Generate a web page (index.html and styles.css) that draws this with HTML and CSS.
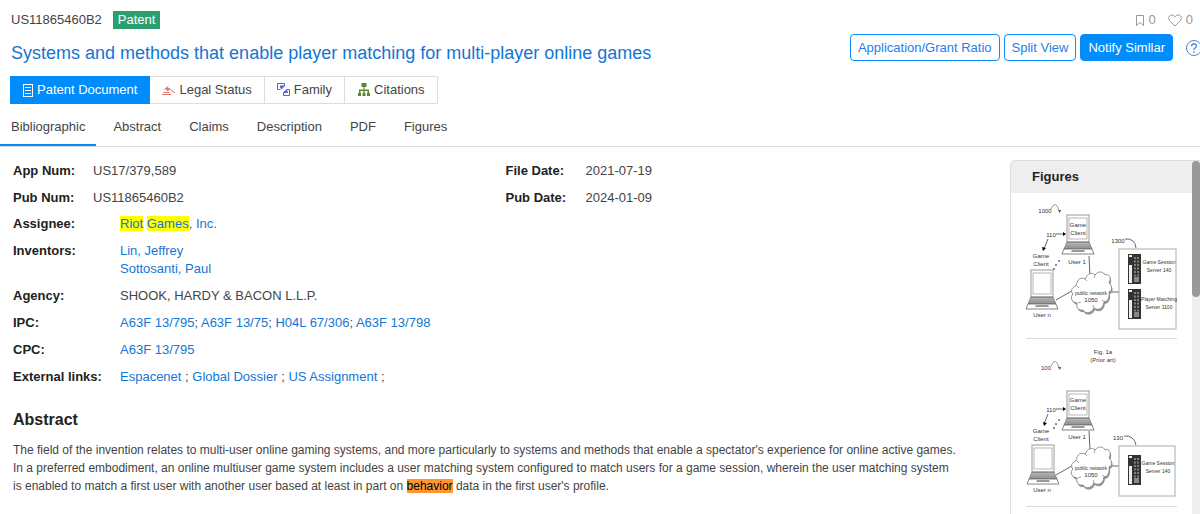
FILE: index.html
```html
<!DOCTYPE html>
<html lang="en">
<head>
<meta charset="utf-8">
<title>US11865460B2</title>
<link rel="stylesheet" href="styles.css">
</head>
<body>
<svg class="defs" aria-hidden="true">
  <defs>
    <g id="laptop">
      <rect x="5" y="0" width="22" height="27" fill="#fff" stroke="#999"/>
      <rect x="7" y="3" width="18" height="21" fill="#fff" stroke="#999" stroke-width=".7"/>
      <path d="M5 27h22l3 7H2z" fill="#999" stroke="#666" stroke-width=".6"/>
      <path d="M4 30h24M5 28.500h22" stroke="#ccc" stroke-width=".5"/>
      <path d="M2 34h28l2 5H0z" fill="#fff" stroke="#666" stroke-width=".8"/>
      <path d="M10 35h12l1 2H9z" fill="#999"/>
    </g>
    <g id="cloud">
      <path d="M6 14c1-7 5-9 9-7 3-6 7-7 10-4 4-5 9-3 10 0 4-2 7 3 4 8 4 3 3 8 0 9 1 6-2 10-5 10-1 7-6 9-10 6-3 6-9 6-11 2-5 1-7-3-6-7-6-1-7-6-4-9-3-3-1-7 3-8z" transform="translate(1 2)" fill="#999"/>
      <path d="M6 14c1-7 5-9 9-7 3-6 7-7 10-4 4-5 9-3 10 0 4-2 7 3 4 8 4 3 3 8 0 9 1 6-2 10-5 10-1 7-6 9-10 6-3 6-9 6-11 2-5 1-7-3-6-7-6-1-7-6-4-9-3-3-1-7 3-8z" fill="#fff" stroke="#777" stroke-width=".8"/>
      <path d="M7 14l2 2M15 7l2 2M25 3l-1 3M35 30l-3-2M8 31l3-1M24 36l-1-3" stroke="#777" stroke-width=".7"/>
    </g>
    <g id="server">
      <rect width="13" height="30" fill="#333"/>
      <rect x="1" y="1" width="3" height="28" fill="#eee"/>
      <rect x="1" y="3" width="3" height="8" fill="#333"/>
      <path d="M7 3v20M10 3v20" stroke="#999" stroke-width="1.500" stroke-dasharray="2 1.500"/>
      <rect x="6" y="23" width="5" height="5" fill="#888"/>
    </g>
    <g id="arrow-arc"><path d="M0 4Q5-6 8 6" fill="none" stroke="#888" stroke-width=".9"/><path d="M7 5l2 3 1-3z" fill="#555"/></g>
  </defs>
</svg>

<header class="header">
  <div class="heading">
    <div class="number-row"><span>US11865460B2</span><span class="tag">Patent</span></div>
    <h1 class="title"><a href="#">Systems and methods that enable player matching for multi-player online games</a></h1>
  </div>
  <div class="tools">
    <div class="counts">
      <button class="count"><svg width="10" height="13" viewBox="0 0 10 13"><path d="M1.500 1.500h7v10L5 8.500 1.500 11.500z" fill="none" stroke="#999"/></svg>0</button>
      <button class="count"><svg width="14" height="13" viewBox="0 0 14 13"><path d="M7 12L1.800 6.800C-.5 4 1 1 3.800 1 5.500 1 6.500 2 7 3 7.500 2 8.500 1 10.200 1 13 1 14.500 4 12.200 6.800z" fill="none" stroke="#999"/></svg>0</button>
    </div>
    <div class="actions">
      <button class="btn">Application/Grant Ratio</button>
      <button class="btn">Split View</button>
      <button class="btn primary">Notify Simllar</button>
      <button class="help" aria-label="Help"><svg width="18" height="18" viewBox="0 0 18 18" fill="none" stroke="#4a86d8"><circle cx="9" cy="9" r="7.500"/><path d="M6.500 7.200Q6.500 5 9 5T11.500 7Q11.500 8 10 9T9 11" stroke-width="1.300"/><path d="M9 12.300v1.400" stroke-width="1.500"/></svg></button>
    </div>
  </div>
</header>

<nav class="views">
  <button class="view active"><svg width="12" height="14" viewBox="0 0 12 14" fill="none" stroke="#fff"><rect x="1.500" y="1.500" width="9" height="12"/><path d="M3 4.500h6M3 7.500h6M3 10.500h6"/></svg>Patent Document</button>
  <button class="view"><svg width="14" height="12" viewBox="0 0 14 12" fill="none" stroke="#e57070"><path d="M0 10.500h9M1.500 8.500h6"/><path d="M2.500 5.500l4-3.500M5 7l3-3" stroke-width="1"/><path d="M4 4l3 2" stroke-width="2.500"/><path d="M7 4.500l6 4.500"/></svg>Legal Status</button>
  <button class="view"><svg width="14" height="14" viewBox="0 0 14 14" fill="none" stroke="#5a5ae0"><path d="M3.500 6.500h-3v-6h7v3"/><path d="M9.500 6.500h3v6h-6v-3"/><path d="M3 3h4L4.500 6z" fill="#5a5ae0"/><path d="M6.500 9.500h4L9.500 7z" fill="#5a5ae0"/></svg>Family</button>
  <button class="view"><svg width="14" height="14" viewBox="0 0 14 14" fill="#5b8a2c"><rect x="4.500" y="0" width="5" height="4"/><path d="M6.500 4h1v2.500H12V10h-1.500V8H7.700v2H6.300V8H3.500v2H2V6.500h4.500z"/><path d="M1 10h3v3H1zM5.500 10h3v3h-3zM10 10h3v3h-3z"/></svg>Citations</button>
</nav>

<nav class="tabs">
  <a class="tab active" href="#">Bibliographic</a>
  <a class="tab" href="#abstract">Abstract</a>
  <a class="tab" href="#">Claims</a>
  <a class="tab" href="#">Description</a>
  <a class="tab" href="#">PDF</a>
  <a class="tab" href="#figures">Figures</a>
</nav>

<div class="content">
  <main class="details">
    <dl class="pairs">
      <div class="pair"><dt>App Num:</dt><dd>US17/379,589</dd></div>
      <div class="pair"><dt>File Date:</dt><dd>2021-07-19</dd></div>
      <div class="pair"><dt>Pub Num:</dt><dd>US11865460B2</dd></div>
      <div class="pair"><dt>Pub Date:</dt><dd>2024-01-09</dd></div>
    </dl>
    <dl class="fields">
      <dt>Assignee:</dt><dd><a href="#"><mark>Riot</mark> <mark>Games</mark>, Inc.</a></dd>
      <dt>Inventors:</dt><dd><a href="#">Lin, Jeffrey</a><br><a href="#">Sottosanti, Paul</a></dd>
      <dt>Agency:</dt><dd>SHOOK, HARDY &amp; BACON L.L.P.</dd>
      <dt>IPC:</dt><dd><a href="#">A63F 13/795</a>; <a href="#">A63F 13/75</a>; <a href="#">H04L 67/306</a>; <a href="#">A63F 13/798</a></dd>
      <dt>CPC:</dt><dd><a href="#">A63F 13/795</a></dd>
      <dt>External links:</dt><dd><a href="#">Espacenet</a> ; <a href="#">Global Dossier</a> ; <a href="#">US Assignment</a> ;</dd>
    </dl>
    <h2 class="section-title" id="abstract">Abstract</h2>
    <p class="abstract">The field of the invention relates to multi-user online gaming systems, and more particularly to systems and methods that enable a spectator's experience for online active games.<br>In a preferred embodiment, an online multiuser game system includes a user matching system configured to match users for a game session, wherein the user matching system<br>is enabled to match a first user with another user based at least in part on <mark class="hit">behavior</mark> data in the first user's profile.</p>
  </main>
  <aside class="figures" id="figures">
    <div class="figures-main">
      <h2 class="figures-title">Figures</h2>
      <div class="figure">
        <svg width="150" height="145" viewBox="0 0 150 145" class="drawing">
          <text x="19" y="20">1000</text><use href="#arrow-arc" x="25" y="12"/>
          <use href="#laptop" x="36" y="22"/><text x="52" y="34">Game</text><text x="52" y="42">Client</text><text x="51" y="71">User 1</text>
          <text x="25" y="44">110</text>
          <path d="M30 41h8M22 46l-4 10M63 63l1 21M30 107l21-12M84 99h9" class="line"/><path d="M37 39l3 2-3 2zM16 54l1 4 3-3z"/>
          <circle cx="28" cy="76" r=".8"/><circle cx="30" cy="72" r=".8"/><circle cx="33" cy="68" r=".8"/>
          <text x="15" y="65">Game</text><text x="15" y="73">Client</text>
          <use href="#laptop" x="0" y="77"/><text x="16" y="124">User n</text>
          <use href="#cloud" x="44" y="79"/><text x="65" y="102" class="small">public network</text><text x="65" y="109">1050</text>
          <text x="92" y="50">1300</text><path d="M99 46q10-1 11 9" class="line"/>
          <rect x="93" y="56" width="57" height="80" class="box"/>
          <use href="#server" x="102" y="61"/><use href="#server" x="102" y="96"/>
          <text x="133" y="71" class="small">Game Session</text><text x="133" y="79" class="small">Server 140</text>
          <text x="133" y="108" class="small">Player Matching</text><text x="133" y="116" class="small">Server 1100</text>
        </svg>
      </div>
      <div class="figure">
        <svg width="150" height="167" viewBox="0 0 150 167" class="drawing">
          <text x="77" y="15">Fig. 1a</text><text x="77" y="23">(Prior art)</text>
          <text x="20" y="31">100</text><use href="#arrow-arc" x="25" y="23"/>
          <use href="#laptop" x="36" y="52"/><text x="52" y="63">Game</text><text x="52" y="71">Client</text><text x="51" y="100">User 1</text>
          <text x="25" y="73">110</text>
          <path d="M30 70h8M22 75l-4 10M63 92l1 19M30 136l21-12M84 127h9" class="line"/><path d="M37 68l3 2-3 2zM17 83l1 4 3-3z"/>
          <circle cx="28" cy="89" r=".8"/><circle cx="30" cy="85" r=".8"/><circle cx="33" cy="81" r=".8"/>
          <text x="15" y="94">Game</text><text x="15" y="102">Client</text>
          <use href="#laptop" x="1" y="106"/><text x="16" y="153">User n</text>
          <use href="#cloud" x="44" y="108"/><text x="65" y="131" class="small">public network</text><text x="65" y="138">1050</text>
          <text x="92" y="101">130</text><path d="M98 97q10-1 12 9" class="line"/>
          <rect x="93" y="107" width="56" height="50" class="box"/>
          <use href="#server" x="102" y="116"/>
          <text x="132" y="126" class="small">Game Session</text><text x="132" y="134" class="small">Server 140</text>
        </svg>
      </div>
    </div>
    <div class="scrollbar"><div class="thumb"></div></div>
  </aside>
</div>
</body>
</html>
```
FILE: styles.css
```css
* { box-sizing: border-box; }
body {
  margin: 0;
  min-height: 100vh;
  display: flex;
  flex-direction: column;
  overflow: hidden;
  background: #fff;
  color: #444;
  font: 13px/18px "Liberation Sans", Arial, sans-serif;
}
a { color: #1276d6; text-decoration: none; }
button { font: inherit; color: inherit; background: none; border: 0; padding: 0; cursor: pointer; }
h1, h2, p, dl, dd { margin: 0; }
.defs { position: absolute; width: 0; height: 0; }

.header { display: flex; justify-content: space-between; padding: 11px 0 0 11px; }
.number-row { display: flex; align-items: center; gap: 11px; }
.tag { background: #2c9f6e; color: #fff; padding: 0 5px; }
.title { margin-top: 12px; font-size: 18px; line-height: 24px; font-weight: 400; }
.tools { display: flex; flex-direction: column; flex: none; margin-right: -3px; }
.counts { display: flex; justify-content: flex-end; gap: 12px; margin-right: 10px; color: #999; }
.count { display: flex; align-items: center; gap: 4px; }
.actions { display: flex; align-items: center; gap: 4px; margin-top: 5px; }
.btn { height: 27px; padding: 0 7px; border: 1px solid #0a8cff; border-radius: 4px; color: #1a7ff0; white-space: nowrap; }
.primary { background: #008cfa; color: #fff; }
.help { display: flex; margin-left: 8px; }

.views { display: flex; margin: 11px 0 0 10px; }
.view {
  display: flex; align-items: center; gap: 3px;
  height: 28px; padding: 0 12px;
  border: 1px solid #ddd; border-left: 0;
  white-space: nowrap;
}
.view.active { background: #008cfa; border-color: #008cfa; color: #fff; }

.tabs { display: flex; gap: 28px; padding-left: 11px; height: 43px; border-bottom: 1px solid #ddd; }
.tab { padding-top: 14px; color: #444; }
.tab.active { margin-left: -11px; padding-left: 11px; padding-right: 11px; margin-right: -11px; border-bottom: 2px solid #008cfa; }

.content { flex: 1; display: flex; align-items: stretch; }
.details { flex: 1; min-width: 0; padding: 15px 12px 0 13px; }
.pairs { display: grid; grid-template-columns: 1fr 1fr; row-gap: 9px; }
.pair { display: grid; grid-template-columns: 80px 1fr; }
dt { font-weight: 700; color: #222; }
.fields { display: grid; grid-template-columns: 107px 1fr; row-gap: 9px; margin-top: 8px; }
mark { background: #ff0; color: inherit; }
.hit { background: #ff9632; color: #000; }
.section-title { margin-top: 22px; font-size: 16px; line-height: 24px; color: #222; }
.abstract { margin-top: 9px; font-size: 12px; }

.figures { display: flex; flex: none; width: 190px; height: 355px; margin-top: 13px; border: 1px solid #ddd; border-width: 1px 0 0 1px; border-top-left-radius: 5px; overflow: hidden; }
.figures-main { flex: 1; }
.figures-title { padding: 7px 21px; background: #eee; font-size: 13px; line-height: 18px; color: #222; }
.figure { margin: 0 15px; border-bottom: 1px solid #ddd; }
.drawing { display: block; overflow: visible; }
.drawing text { font-size: 6px; fill: #333; text-anchor: middle; }
.drawing .small { font-size: 5px; }
.line { fill: none; stroke: #666; stroke-width: 1; }
.box { fill: none; stroke: #aaa; stroke-width: 1; }
.scrollbar { width: 8px; background: #eee; }
.thumb { height: 136px; border-radius: 4px; background: #999; }
```
